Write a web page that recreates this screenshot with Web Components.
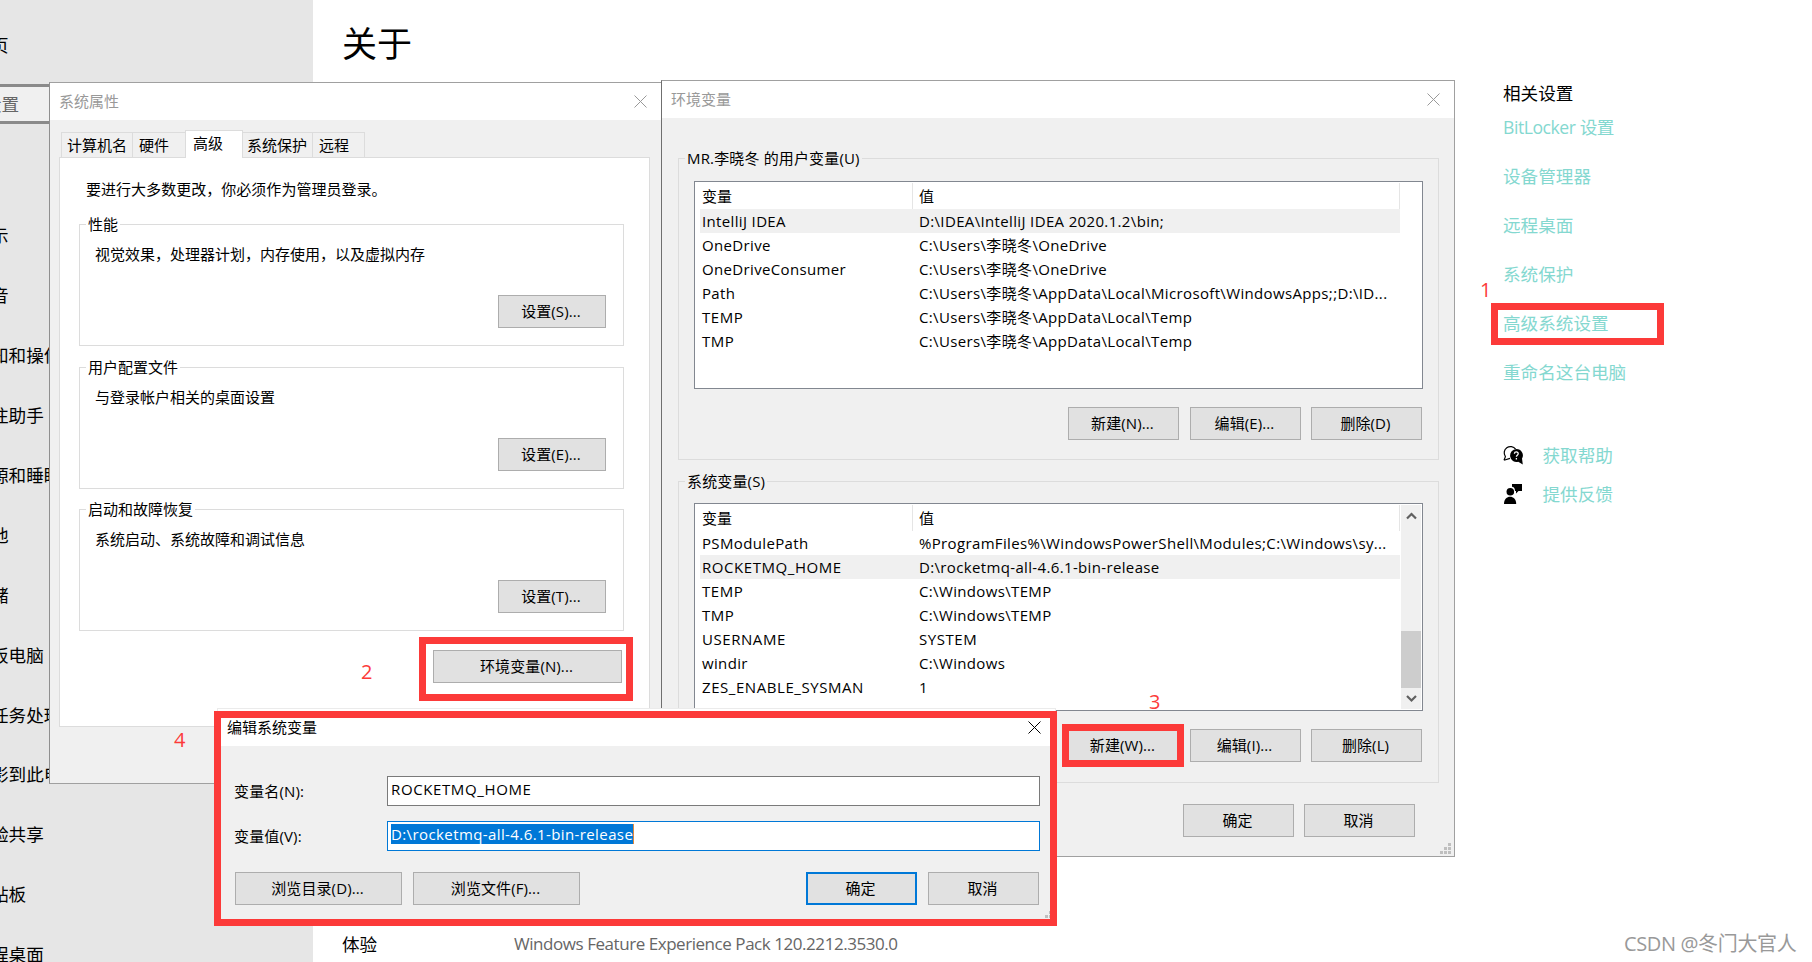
<!DOCTYPE html>
<html lang="zh-CN">
<head>
<meta charset="utf-8">
<title>关于</title>
<style>
    html, body {
        margin: 0;
        width: 1812px;
        height: 962px;
        overflow: hidden;
        background: #fff;
    }
    body {
        position: relative;
        font-family: "Open Sans", "Noto Sans CJK SC", sans-serif;
        font-size: 15px;
        line-height: 20px;
        color: #000;
    }
    /* windows on the desktop */
    win-dialog, mark-box, mark-number { position: absolute; }
    #props { left: 49px; top: 82px; width: 613px; height: 702px; }
    #env { left: 661px; top: 80px; width: 794px; height: 777px; --edge-left: #6f6f6f; }
    #edit { left: 217px; top: 708px; width: 839px; height: 217px; --edge: #ebebeb; --edge-left: #ebebeb; --title: #000; }

    #props tab-strip { margin: 10px 0 0 11px; }
    .page {
        display: flex;
        flex-direction: column;
        box-sizing: border-box;
        width: 591px;
        height: 570px;
        margin-left: 9px;
        padding: 21px 0 0 19px;
        border: 1px solid #dcdcdc;
        background: #fff;
    }
    .page p { margin: 0 0 4px 7px; letter-spacing: 0.03px; }
    .page group-box { width: 545px; height: 132px; margin-top: 11px; }
    .page group-box:last-of-type { margin-top: 10px; }
    .page group-box div {
        flex: 1;
        display: flex;
        flex-direction: column;
        justify-content: space-between;
        padding: 9px 17px 17px 15px;
    }
    .page push-button { align-self: flex-end; }
    .page > push-button { margin: 19px 27px 0 0; }

    #env group-box { width: 761px; height: 312px; margin-left: 16px; --legend-spacing: 0.15px; }
    #env group-box:first-of-type { margin-top: 30px; }
    #env group-box:last-of-type { margin-top: 11px; }
    #env var-list { margin: 12px 0 0 15px; }
    #env group-box:last-of-type var-list { margin-top: 11px; }
    .row { display: flex; justify-content: flex-end; }
    #env group-box .row { margin: 18px 16px 0 0; gap: 10px; }
    #env group-box .row push-button:first-child { margin-right: 1px; }
    #env > .row { margin: 21px 39px 0 0; gap: 10px; }

    .form {
        display: grid;
        grid-template-columns: 153px 653px;
        grid-auto-rows: 30px;
        row-gap: 15px;
        align-items: center;
        margin: 30px 0 0 16px;
    }
    .form label { letter-spacing: 0.15px; }
    #edit .row { margin: 21px 16px 0 17px; gap: 11px; }
    #edit .row span { flex: 1; }
</style>
</head>
<body>
<settings-page></settings-page>

<win-dialog id="props" caption="系统属性">
    <tab-strip></tab-strip>
    <div class="page">
        <p>要进行大多数更改，你必须作为管理员登录。</p>
        <group-box legend="性能">
            <div>视觉效果，处理器计划，内存使用，以及虚拟内存<push-button w="108">设置(S)...</push-button></div>
        </group-box>
        <group-box legend="用户配置文件">
            <div>与登录帐户相关的桌面设置<push-button w="108">设置(E)...</push-button></div>
        </group-box>
        <group-box legend="启动和故障恢复">
            <div>系统启动、系统故障和调试信息<push-button w="108">设置(T)...</push-button></div>
        </group-box>
        <push-button w="189">环境变量(N)...</push-button>
    </div>
</win-dialog>

<win-dialog id="env" caption="环境变量" grip>
    <group-box legend="MR.李晓冬 的用户变量(U)">
        <var-list id="user"></var-list>
        <div class="row">
            <push-button>新建(N)...</push-button>
            <push-button>编辑(E)...</push-button>
            <push-button>删除(D)</push-button>
        </div>
    </group-box>
    <group-box legend="系统变量(S)">
        <var-list id="system" scroll></var-list>
        <div class="row">
            <push-button>新建(W)...</push-button>
            <push-button>编辑(I)...</push-button>
            <push-button>删除(L)</push-button>
        </div>
    </group-box>
    <div class="row">
        <push-button>确定</push-button>
        <push-button>取消</push-button>
    </div>
</win-dialog>

<win-dialog id="edit" caption="编辑系统变量" grip>
    <div class="form">
        <label>变量名(N):</label><text-field>ROCKETMQ_HOME</text-field>
        <label>变量值(V):</label><text-field selected>D:\rocketmq-all-4.6.1-bin-release</text-field>
    </div>
    <div class="row">
        <push-button w="167">浏览目录(D)...</push-button>
        <push-button w="167">浏览文件(F)...</push-button>
        <span></span>
        <push-button default>确定</push-button>
        <push-button>取消</push-button>
    </div>
</win-dialog>

<mark-box style="left:1491px;top:303px;width:173px;height:42px"></mark-box>
<mark-box style="left:419px;top:637px;width:214px;height:64px"></mark-box>
<mark-box style="left:1062px;top:724px;width:122px;height:43px"></mark-box>
<mark-box style="left:214px;top:711px;width:843px;height:215px"></mark-box>
<mark-number style="left:1480px;top:277px">1</mark-number>
<mark-number style="left:361px;top:659px">2</mark-number>
<mark-number style="left:1149px;top:689px">3</mark-number>
<mark-number style="left:174px;top:727px">4</mark-number>

<script>
class SettingsPage extends HTMLElement {
    constructor() {
        super();
        this.attachShadow({ mode: 'open' });
    }

    connectedCallback() {
        const items = ['示', '音', '知和操作', '注助手', '源和睡眠', '池', '储', '板电脑', '任务处理', '影到此电脑', '验共享', '贴板', '程桌面'];
        const links = ['BitLocker 设置', '设备管理器', '远程桌面', '系统保护', '高级系统设置', '重命名这台电脑'];
        this.shadowRoot.innerHTML = `
        <style>
            :host {
                display: flex;
                height: 962px;
                font-size: 17.6px;
                line-height: 24px;
                white-space: nowrap;
            }
            nav {
                width: 313px;
                flex: none;
                overflow: hidden;
                background: #e6e6e6;
            }
            nav div { height: 24px; margin: 0 0 35.95px -9px; }
            nav .home { margin: 33px 0 27px -9px; }
            nav .search {
                display: flex;
                align-items: center;
                box-sizing: border-box;
                height: 40px;
                margin: 0 13px 99px -20px;
                padding-left: 4px;
                border: 3px solid #8a8a8a;
                border-left: 0;
                background: #f0f0f0;
                color: #666;
            }
            main {
                flex: 1;
                display: flex;
                flex-direction: column;
                justify-content: space-between;
                padding: 20px 0 6px 29px;
            }
            h1 { margin: 0; font-size: 35px; line-height: 48px; font-weight: normal; }
            .spec { display: flex; }
            .spec b { width: 172px; font-weight: normal; }
            .spec span { color: #666; font-size: 17px; letter-spacing: -0.45px; }
            aside {
                width: 309px;
                display: flex;
                flex-direction: column;
                padding-top: 81px;
                color: #84d8d0;
            }
            aside h2 { margin: 0 0 10px; font: inherit; color: #000; }
            aside a { margin-bottom: 25px; }
            aside a:first-of-type { letter-spacing: -0.45px; }
            .help { display: flex; align-items: center; height: 24px; margin-bottom: 15px; }
            .help svg { width: 20px; height: 20px; margin-right: 19.5px; }
            .help:first-of-type { margin-top: 34px; }
            .watermark {
                font-size: 20px;
                color: #999;
                margin: auto 0 6px 121px;
                letter-spacing: -0.36px;
            }
        </style>
        <nav>
            <div class="home">页</div>
            <div class="search">设置</div>
            ${items.map(item => `<div>${item}</div>`).join('')}
        </nav>
        <main>
            <h1>关于</h1>
            <div class="spec"><b>体验</b><span>Windows Feature Experience Pack 120.2212.3530.0</span></div>
        </main>
        <aside>
            <h2>相关设置</h2>
            ${links.map(link => `<a>${link}</a>`).join('')}
            <div class="help">
                <svg viewBox="0 0 20 20">
                    <path d="M1 15.2 2.4 11.6A6.3 6.3 0 1 1 12.6 4.2M1 15.2 7 13.4" fill="none" stroke="#000" stroke-width="1.2"/>
                    <path d="M13.4 4a6.4 6.4 0 0 1 5.6 9.6l.8 5.8-4.6-2.6A6.5 6.5 0 1 1 13.4 4z" fill="#000"/>
                    <path d="M11.4 8.7c.1-2.5 4-2.3 3.8.1-.1 1.4-1.8 1.5-1.8 3M13.4 13v1.5" fill="none" stroke="#fff" stroke-width="1.3"/>
                </svg>获取帮助
            </div>
            <div class="help">
                <svg viewBox="0 0 20 20">
                    <circle cx="7.3" cy="7.8" r="3.8"/>
                    <path d="M1 20c0-9.6 12.2-9.6 12.2 0z"/>
                    <path d="M9 0h10v7h-3.500l-2.500 2.600V7h-1C12 4 10.500 3 9 2.800z"/>
                </svg>提供反馈
            </div>
            <div class="watermark">CSDN @冬门大官人</div>
        </aside>
        `;
    }
}

class WinDialog extends HTMLElement {
    constructor() {
        super();
        this.attachShadow({ mode: 'open' });
    }

    connectedCallback() {
        const dots = [[8, 0], [4, 4], [8, 4], [0, 8], [4, 8], [8, 8]];
        this.shadowRoot.innerHTML = `
        <style>
            :host {
                display: flex;
                flex-direction: column;
                box-sizing: border-box;
                border: 1px solid var(--edge, #a0a0a0);
                border-left-color: var(--edge-left, #8f8f8f);
                background: #f0f0f0;
                white-space: nowrap;
            }
            header {
                display: flex;
                flex: none;
                justify-content: space-between;
                align-items: center;
                height: 37px;
                padding: 0 14px 0 9px;
                background: #fff;
                color: var(--title, #999);
            }
            header span { padding-bottom: 2px; }
            header svg { width: 13px; height: 13px; stroke: currentColor; }
            .grip { position: absolute; right: 3px; bottom: 2px; width: 11px; height: 11px; fill: #bfbfbf; }
        </style>
        <header>
            <span>${this.getAttribute('caption')}</span>
            <svg viewBox="0 0 13 13"><path d="M.5.5l12 12M12.500.5l-12 12"/></svg>
        </header>
        <slot></slot>
        ${this.hasAttribute('grip') ? `<svg class="grip">${dots.map(([x, y]) => `<rect x="${x}" y="${y}" width="3" height="3"/>`).join('')}</svg>` : ''}
        `;
    }
}

class TabStrip extends HTMLElement {
    constructor() {
        super();
        this.attachShadow({ mode: 'open' });
    }

    connectedCallback() {
        // label, width, left padding
        const tabs = [['计算机名', 72, 5], ['硬件', 54, 6], ['高级', 58, 7], ['系统保护', 71, 4], ['远程', 53, 6]];
        this.shadowRoot.innerHTML = `
        <style>
            :host { display: flex; align-items: flex-end; height: 27px; flex: none; }
            div {
                box-sizing: border-box;
                height: 25px;
                padding-top: 2px;
                margin-right: -1px;
                border: 1px solid #dcdcdc;
                border-bottom: 0;
            }
            .active {
                position: relative;
                height: 28px;
                margin-bottom: -1px;
                background: #fff;
            }
        </style>
        ${tabs.map(([label, width, pad]) => `<div class="${label === '高级' ? 'active' : ''}" style="width:${width}px;padding-left:${pad}px">${label}</div>`).join('')}
        `;
    }
}

class GroupBox extends HTMLElement {
    constructor() {
        super();
        this.attachShadow({ mode: 'open' });
    }

    connectedCallback() {
        this.shadowRoot.innerHTML = `
        <style>
            :host { display: block; flex: none; }
            fieldset {
                display: flex;
                flex-direction: column;
                box-sizing: border-box;
                height: 100%;
                margin: 0;
                padding: 0;
                border: 1px solid #dcdcdc;
            }
            legend {
                margin-left: 6px;
                padding: 0 2px;
                line-height: 21px;
                letter-spacing: var(--legend-spacing, 0);
            }
        </style>
        <fieldset>
            <legend>${this.getAttribute('legend')}</legend>
            <slot></slot>
        </fieldset>
        `;
    }
}

class PushButton extends HTMLElement {
    constructor() {
        super();
        this.attachShadow({ mode: 'open' });
    }

    connectedCallback() {
        this.shadowRoot.innerHTML = `
        <style>
            :host {
                display: flex;
                flex: none;
                align-items: center;
                justify-content: center;
                box-sizing: border-box;
                width: ${this.getAttribute('w') || 111}px;
                height: 33px;
                padding: 0 2px 2px 0;
                border: 1px solid #adadad;
                background: #e1e1e1;
                letter-spacing: 0.1px;
            }
            :host([default]) { border: 2px solid #0078d7; }
        </style>
        <slot></slot>
        `;
    }
}

class TextField extends HTMLElement {
    constructor() {
        super();
        this.attachShadow({ mode: 'open' });
    }

    connectedCallback() {
        this.shadowRoot.innerHTML = `
        <style>
            :host {
                display: block;
                box-sizing: border-box;
                height: 30px;
                padding: 2px 3px;
                border: 1px solid #7a7a7a;
                background: #fff;
                letter-spacing: 0.62px;
            }
            :host([selected]) { border-color: #0078d7; letter-spacing: 0.4px; }
            span { display: inline-block; height: 20px; }
            :host([selected]) span { background: #0078d7; color: #fff; border-right: 1px solid #e08a3c; }
        </style>
        <span><slot></slot></span>
        `;
    }
}

const variables = {
    user: {
        selected: 0,
        rows: [
            ['IntelliJ IDEA', 'D:\\IDEA\\IntelliJ IDEA 2020.1.2\\bin;'],
            ['OneDrive', 'C:\\Users\\李晓冬\\OneDrive'],
            ['OneDriveConsumer', 'C:\\Users\\李晓冬\\OneDrive'],
            ['Path', 'C:\\Users\\李晓冬\\AppData\\Local\\Microsoft\\WindowsApps;;D:\\ID...'],
            ['TEMP', 'C:\\Users\\李晓冬\\AppData\\Local\\Temp'],
            ['TMP', 'C:\\Users\\李晓冬\\AppData\\Local\\Temp']
        ]
    },
    system: {
        selected: 1,
        rows: [
            ['PSModulePath', '%ProgramFiles%\\WindowsPowerShell\\Modules;C:\\Windows\\sy...'],
            ['ROCKETMQ_HOME', 'D:\\rocketmq-all-4.6.1-bin-release'],
            ['TEMP', 'C:\\Windows\\TEMP'],
            ['TMP', 'C:\\Windows\\TEMP'],
            ['USERNAME', 'SYSTEM'],
            ['windir', 'C:\\Windows'],
            ['ZES_ENABLE_SYSMAN', '1']
        ]
    }
};

class VarList extends HTMLElement {
    constructor() {
        super();
        this.attachShadow({ mode: 'open' });
    }

    // capitals are set a little looser
    cell(text) {
        return `<span class="${/^[A-Z_]+$/.test(text) ? 'caps' : ''}">${text}</span>`;
    }

    connectedCallback() {
        const { rows, selected } = variables[this.id];
        this.shadowRoot.innerHTML = `
        <style>
            :host {
                display: flex;
                justify-content: space-between;
                box-sizing: border-box;
                width: 729px;
                height: 208px;
                padding: 1px 1px 1px 5px;
                border: 1px solid #828790;
                background: #fff;
            }
            .table { width: 700px; }
            .tr { display: flex; height: 24px; line-height: 24px; letter-spacing: 0.35px; }
            .tr.selected { background: #f0f0f0; }
            .tr span { box-sizing: border-box; width: 487px; padding-left: 6px; }
            .tr span:first-child { width: 213px; padding-left: 2px; }
            .tr .caps { letter-spacing: 0.56px; }
            .tr.head { height: 26px; line-height: 26px; letter-spacing: 0; }
            .head span { border-right: 1px solid #e5e5e5; }
            .head { margin-bottom: 0; }
            .bar {
                display: flex;
                flex-direction: column;
                align-items: center;
                width: 20px;
                background: #f0f0f0;
            }
            .bar svg { width: 11px; height: 21px; fill: none; stroke: #606060; stroke-width: 2.2; }
            .bar i { width: 20px; height: 57px; margin-top: auto; background: #cdcdcd; }
        </style>
        <div class="table">
            <div class="tr head"><span>变量</span><span>值</span></div>
            ${rows.map(([name, value], i) => `<div class="tr ${i === selected ? 'selected' : ''}">${this.cell(name)}${this.cell(value)}</div>`).join('')}
        </div>
        ${this.hasAttribute('scroll') ? `
        <div class="bar">
            <svg viewBox="0 0 11 21"><path d="M1 13.500l4.500-4.500 4.500 4.500"/></svg>
            <i></i>
            <svg viewBox="0 0 11 21"><path d="M1 8l4.500 4.500L10 8"/></svg>
        </div>` : ''}
        `;
    }
}

class MarkBox extends HTMLElement {
    constructor() {
        super();
        this.attachShadow({ mode: 'open' }).innerHTML = `
        <style>
            :host { display: block; box-sizing: border-box; border: 7px solid #fc3a39; }
        </style>
        `;
    }
}

class MarkNumber extends HTMLElement {
    constructor() {
        super();
        this.attachShadow({ mode: 'open' }).innerHTML = `
        <style>
            :host { display: block; font-size: 20px; line-height: 26px; color: #fc3a39; }
        </style>
        <slot></slot>
        `;
    }
}

customElements.define('settings-page', SettingsPage);
customElements.define('win-dialog', WinDialog);
customElements.define('tab-strip', TabStrip);
customElements.define('group-box', GroupBox);
customElements.define('push-button', PushButton);
customElements.define('text-field', TextField);
customElements.define('var-list', VarList);
customElements.define('mark-box', MarkBox);
customElements.define('mark-number', MarkNumber);
</script>
</body>
</html>
